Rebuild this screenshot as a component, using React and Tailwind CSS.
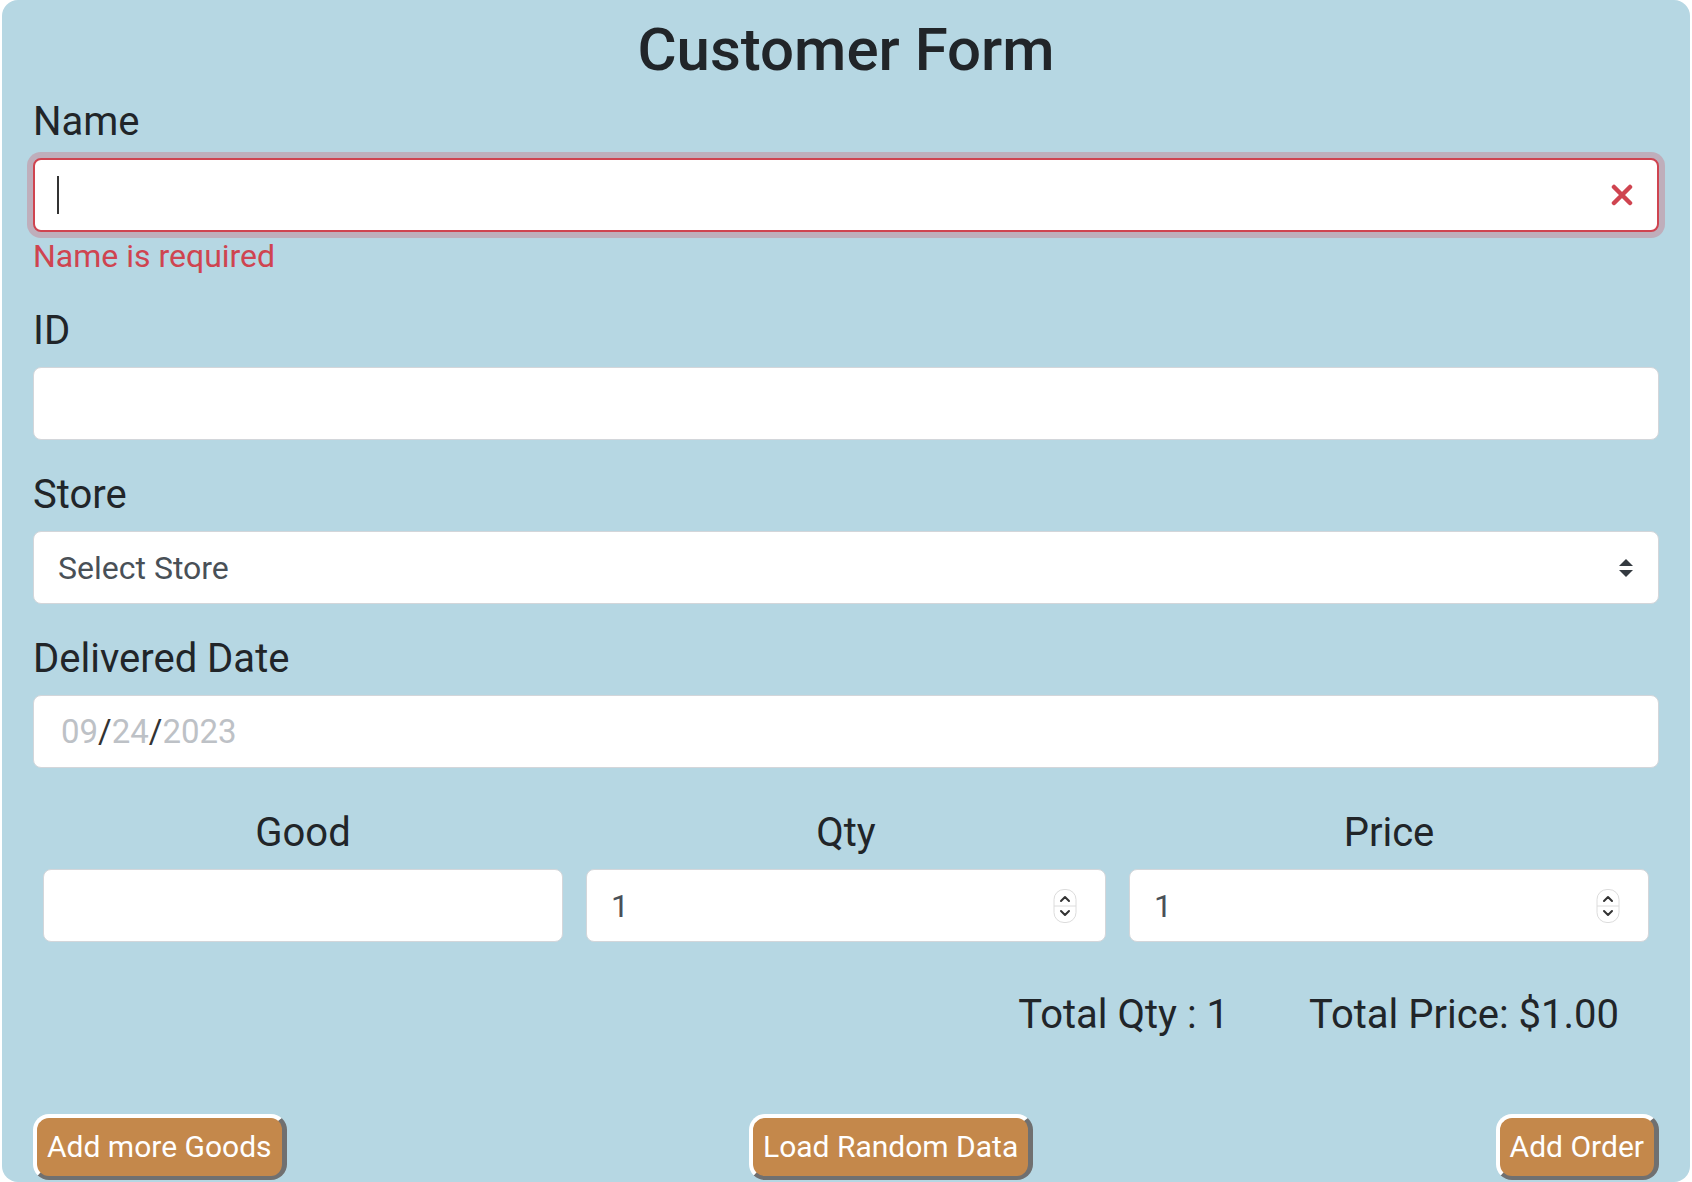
import React from "react";

const Spinner = () => (
  <svg width="24" height="34" viewBox="0 0 24 34" className="shrink-0">
    <rect x="1" y="0.5" width="22" height="33" rx="10" fill="#fff" stroke="#dcdcdc" />
    <line x1="1" y1="17" x2="23" y2="17" stroke="#dcdcdc" />
    <path d="M8 12 L12 8 L16 12" fill="none" stroke="#333" strokeWidth="2" strokeLinecap="round" strokeLinejoin="round" />
    <path d="M8 22 L12 26 L16 22" fill="none" stroke="#333" strokeWidth="2" strokeLinecap="round" strokeLinejoin="round" />
  </svg>
);

const Label = ({ children }) => (
  <div className="text-[40px] leading-[54px] mb-[9px]">{children}</div>
);

const Box = ({ children, className = "" }) => (
  <div
    className={`h-[73px] flex items-center rounded-[8px] border border-[#d3d6da] bg-white px-[24px] ${className}`}
  >
    {children}
  </div>
);

const Button = ({ children }) => (
  <button className="h-[66px] flex items-center rounded-[16px] border-t-4 border-l-4 border-r-[5px] border-b-4 border-t-white border-l-white border-r-[#707070] border-b-[#707070] bg-[#c4884b] px-[10px] text-[30px] leading-none text-white">
    {children}
  </button>
);

export default function App() {
  return (
    <div className="min-h-screen bg-white font-['Roboto',sans-serif]">
      <div className="mx-[2px] h-[1182px] overflow-hidden rounded-[16px] bg-[#b6d7e3] px-[31px] pt-[13px] text-[#212529]">
        <h1 className="text-center text-[60px] font-medium leading-[74px]">
          Customer Form
        </h1>

        {/* Name */}
        <div className="mt-[8px]">
          <Label>Name</Label>
          <div className="h-[74px] flex items-center justify-between rounded-[8px] border-2 border-[#cf4450] bg-white pl-[22px] pr-[24px] shadow-[0_0_0_6px_rgba(220,53,69,0.25)]">
            <span className="block w-[2px] h-[38px] bg-[#333]" />
            <svg width="22" height="22" viewBox="0 0 22 22">
              <path d="M3 3 L19 19 M19 3 L3 19" stroke="#cf4450" strokeWidth="4.5" strokeLinecap="round" />
            </svg>
          </div>
          <div className="mt-[4px] text-[32px] leading-[40px] text-[#cf4450]">Name is required</div>
        </div>

        {/* ID */}
        <div className="mt-[28px]">
          <Label>ID</Label>
          <Box />
        </div>

        {/* Store */}
        <div className="mt-[28px]">
          <Label>Store</Label>
          <Box className="justify-between pr-[24px]">
            <span className="text-[32px] text-[#495057]">Select Store</span>
            <svg width="16" height="20" viewBox="0 0 16 20">
              <path d="M1 8 L8 1 L15 8 Z" fill="#343a40" />
              <path d="M1 12 L8 19 L15 12 Z" fill="#343a40" />
            </svg>
          </Box>
        </div>

        {/* Delivered Date */}
        <div className="mt-[28px]">
          <Label>Delivered Date</Label>
          <Box className="pl-[27px]">
            <span className="text-[33px] text-[#bdc1c6]">
              09<span className="text-[#333]">/</span>24<span className="text-[#333]">/</span>2023
            </span>
          </Box>
        </div>

        {/* Goods */}
        <div className="mt-[38px] grid grid-cols-3 gap-x-[23px] px-[10px]">
          {["Good", "Qty", "Price"].map((t) => (
            <div key={t} className="text-center text-[40px] leading-[54px]">
              {t}
            </div>
          ))}
          <Box className="mt-[9px]" />
          <Box className="mt-[9px] justify-between pr-[28px]">
            <span className="text-[32px] text-[#495057]">1</span>
            <Spinner />
          </Box>
          <Box className="mt-[9px] justify-between pr-[28px]">
            <span className="text-[32px] text-[#495057]">1</span>
            <Spinner />
          </Box>
        </div>

        {/* Totals */}
        <div className="mt-[46px] flex justify-end gap-[80px] pr-[40px] text-[40px] leading-[54px]">
          <span>Total Qty : 1</span>
          <span>Total Price: $1.00</span>
        </div>

        {/* Buttons */}
        <div className="mt-[72px] flex justify-between">
          <Button>Add more Goods</Button>
          <Button>Load Random Data</Button>
          <Button>Add Order</Button>
        </div>
      </div>
    </div>
  );
}
